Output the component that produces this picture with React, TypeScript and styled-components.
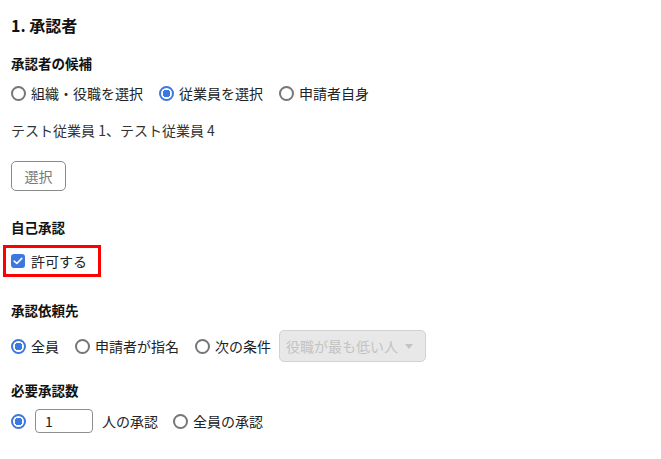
import React from "react";
import styled, { createGlobalStyle } from "styled-components";

const Global = createGlobalStyle`
  html, body { margin: 0; padding: 0; background: #fff; }
  body {
    font-family: "Noto Sans CJK JP", "Noto Sans", "Liberation Sans", sans-serif;
    color: #222;
  }
`;

const Page = styled.div`
  padding: 15px 0 0 11px;
  display: flex;
  flex-direction: column;
  align-items: flex-start;
`;

const Title = styled.h2`
  margin: 0;
  font-size: 16px;
  font-weight: 700;
  line-height: 20px;
  color: #111;
`;

const Label = styled.div<{ $mt: number }>`
  margin-top: ${(p) => p.$mt}px;
  font-size: 13.5px;
  font-weight: 700;
  line-height: 20px;
  color: #111;
`;

const Row = styled.div<{ $mt: number; $h?: number }>`
  margin-top: ${(p) => p.$mt}px;
  display: flex;
  align-items: center;
  height: ${(p) => p.$h ?? 20}px;
  font-size: 14px;
`;

const Option = styled.label<{ $gap?: number }>`
  display: inline-flex;
  align-items: center;
  gap: 5px;
  margin-right: ${(p) => p.$gap ?? 16}px;
  line-height: 20px;
  color: #222;
  white-space: nowrap;
`;

const Radio = styled.span<{ $on?: boolean }>`
  box-sizing: border-box;
  width: 15px;
  height: 15px;
  border-radius: 50%;
  border: ${(p) => (p.$on ? "2px solid #3b78e0" : "2px solid #767676")};
  background: ${(p) =>
    p.$on
      ? "radial-gradient(circle, #3b78e0 0 3.6px, #fff 4px)"
      : "#fff"};
  flex: none;
`;

const Text = styled.div<{ $mt: number }>`
  margin-top: ${(p) => p.$mt}px;
  font-size: 14px;
  line-height: 20px;
  color: #333;
`;

const Button = styled.button`
  margin-top: 21px;
  box-sizing: border-box;
  width: 55px;
  height: 30px;
  border: 1px solid #8a8a8a;
  border-radius: 5px;
  background: #fff;
  color: #7a7a7a;
  font-family: inherit;
  font-size: 14px;
  padding: 0;
`;

const Highlight = styled.div`
  margin-top: 8px;
  margin-left: -8px;
  box-sizing: border-box;
  height: 32px;
  border: 3px solid #f00;
  display: inline-flex;
  align-items: center;
  gap: 6px;
  padding: 0 11px 0 5px;
  font-size: 14px;
  color: #222;
`;

const Check = styled.span`
  width: 14px;
  height: 14px;
  border-radius: 3px;
  background: #3b78e0;
  display: inline-flex;
  align-items: center;
  justify-content: center;
  flex: none;
`;

const Select = styled.div`
  box-sizing: border-box;
  width: 147px;
  height: 32px;
  border: 1px solid #d2d2d2;
  border-radius: 5px;
  background: #e8e8e8;
  color: #c3c3c3;
  display: inline-flex;
  align-items: center;
  justify-content: space-between;
  padding: 0 12px 0 6px;
  font-size: 14px;
  white-space: nowrap;
`;

const Caret = styled.span`
  width: 0;
  height: 0;
  border-left: 4.5px solid transparent;
  border-right: 4.5px solid transparent;
  border-top: 5px solid #c3c3c3;
`;

const NumberInput = styled.div`
  box-sizing: border-box;
  width: 58px;
  height: 24px;
  border: 1px solid #8e8e8e;
  border-radius: 4px;
  padding-left: 9px;
  display: flex;
  align-items: center;
  font-size: 14px;
  color: #222;
  margin-right: 9px;
`;

const Plain = styled.span`
  margin-right: 15px;
  color: #222;
  white-space: nowrap;
`;

export default function App() {
  return (
    <>
      <Global />
      <Page>
        <Title>1. 承認者</Title>

        <Label $mt={18}>承認者の候補</Label>
        <Row $mt={10}>
          <Option>
            <Radio />
            組織・役職を選択
          </Option>
          <Option>
            <Radio $on />
            従業員を選択
          </Option>
          <Option>
            <Radio />
            申請者自身
          </Option>
        </Row>

        <Text $mt={17}>テスト従業員 1、テスト従業員 4</Text>

        <Button>選択</Button>

        <Label $mt={26}>自己承認</Label>
        <Highlight>
          <Check>
            <svg width="10" height="8" viewBox="0 0 10 8">
              <path
                d="M1.2 4.1 L3.8 6.5 L8.8 1.4"
                fill="none"
                stroke="#fff"
                strokeWidth="1.6"
                strokeLinecap="round"
                strokeLinejoin="round"
              />
            </svg>
          </Check>
          許可する
        </Highlight>

        <Label $mt={23}>承認依頼先</Label>
        <Row $mt={10} $h={32}>
          <Option>
            <Radio $on />
            全員
          </Option>
          <Option>
            <Radio />
            申請者が指名
          </Option>
          <Option $gap={8}>
            <Radio />
            次の条件
          </Option>
          <Select>
            役職が最も低い人
            <Caret />
          </Select>
        </Row>

        <Label $mt={18}>必要承認数</Label>
        <Row $mt={9} $h={24}>
          <Option $gap={9}>
            <Radio $on />
          </Option>
          <NumberInput>1</NumberInput>
          <Plain>人の承認</Plain>
          <Option>
            <Radio />
            全員の承認
          </Option>
        </Row>
      </Page>
    </>
  );
}
